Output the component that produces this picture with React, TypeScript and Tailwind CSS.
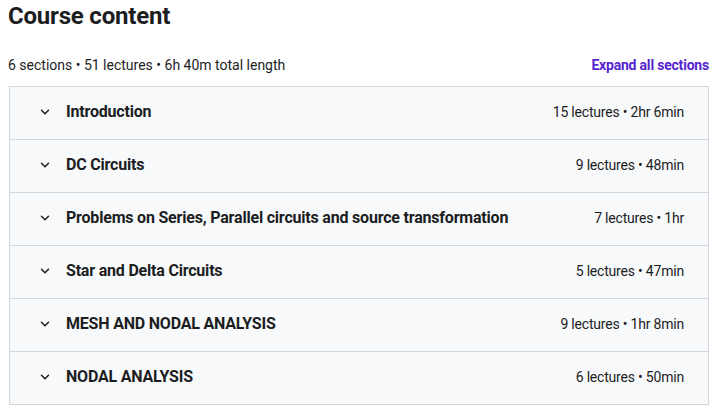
import { ChevronDown } from 'lucide-react'

const sections = [
  { title: 'Introduction', meta: '15 lectures • 2hr 6min' },
  { title: 'DC Circuits', meta: '9 lectures • 48min' },
  { title: 'Problems on Series, Parallel circuits and source transformation', meta: '7 lectures • 1hr' },
  { title: 'Star and Delta Circuits', meta: '5 lectures • 47min' },
  { title: 'MESH AND NODAL ANALYSIS', meta: '9 lectures • 1hr 8min' },
  { title: 'NODAL ANALYSIS', meta: '6 lectures • 50min' },
]

export default function App() {
  return (
    <div className="min-h-screen bg-white text-[#1c1d1f] font-['Roboto',sans-serif]">
      <div className="ml-[8px] w-[701px] pt-[1px]">
        <h2 className="text-[24px] leading-[30px] font-bold tracking-[-0.2px]">Course content</h2>
        <div className="mt-[21px] flex items-center justify-between h-[26px] text-[14px]">
          <span>6 sections • 51 lectures • 6h 40m total length</span>
          <button className="font-bold text-[#5624d0] tracking-[-0.2px]">Expand all sections</button>
        </div>
        <div className="mt-[8px] ml-[1px] border-x border-b border-[#d1d7dc]">
          {sections.map((section) => (
            <div
              key={section.title}
              className="flex items-center h-[53px] pb-[2px] bg-[#f7f9fa] pl-[28px] pr-[24px] border-t border-[#d1d7dc]"
            >
              <ChevronDown size={14} strokeWidth={2.5} className="shrink-0" />
              <span className="ml-[14px] flex-1 text-[16px] font-bold tracking-[-0.2px]">{section.title}</span>
              <span className="text-[14px] tracking-[-0.2px]">{section.meta}</span>
            </div>
          ))}
        </div>
      </div>
    </div>
  )
}
